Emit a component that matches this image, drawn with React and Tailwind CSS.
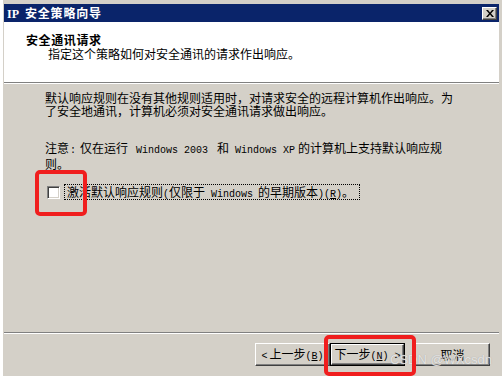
import React from "react";

const cjk = "font-['Noto_Sans_CJK_SC',sans-serif] [text-autospace:no-autospace]";

const mono = "font-['Liberation_Mono',monospace] text-[10px]";

const L = ({ children }) => <span className={mono}>{children}</span>;

// latin run with a fixed advance, so the CJK text after it lands where the reference has it
const Run = ({ className, children }) => (
  <span className={"inline-block align-baseline " + mono + " " + className}>{children}</span>
);

const Btn = ({ children, primary }) => (
  <div className={primary ? "border border-black" : ""}>
    <div
      className={
        "flex items-center justify-center border border-t-white border-l-white border-b-[#404040] border-r-[#404040] bg-[#d4d0c8] shadow-[inset_-1px_-1px_0_#808080] text-[12px] leading-[13px] text-black whitespace-nowrap " +
        (primary ? "h-[21px] w-[73px]" : "h-[23px] w-[75px]")
      }
    >
      <span>{children}</span>
    </div>
  </div>
);

const CloseIcon = () => (
  <svg width="8" height="7" viewBox="0 0 8 7">
    <path d="M0 0h2l2 2.5L6 0h2L5 3.5 8 7H6L4 4.5 2 7H0l3-3.5z" fill="#000" />
  </svg>
);

const App = () => {
  return (
    <div className={"relative w-[502px] h-[376px] overflow-hidden bg-[#d4d0c8] " + cjk}>
      <div className="flex h-full">
        <div className="w-[3px] bg-white" />

        <div className="flex flex-1 flex-col bg-[#d4d0c8] pl-[1px] pr-[3px] pt-[4px]">
          {/* title bar */}
          <div className="flex h-[18px] items-center justify-between bg-[#0a246a] pl-[3px] pr-[2px]">
            <div className="whitespace-nowrap text-[12px] font-bold leading-[14px] text-white">
              <span className="font-['Liberation_Serif',serif] text-[12px] mr-[6px]">IP</span>
              <span className="tracking-[0.8px]">安全策略向导</span>
            </div>
            <div className="flex h-[13px] w-[15px] items-center justify-center border border-t-white border-l-white border-b-[#404040] border-r-[#404040] bg-[#d4d0c8] shadow-[inset_-1px_-1px_0_#808080]">
              <CloseIcon />
            </div>
          </div>

          {/* header */}
          <div className="h-[60px] bg-white pt-[11px] text-[12px] leading-[14px] text-black">
            <div className="pl-[22px] font-bold tracking-[0.6px]">安全通讯请求</div>
            <div className="pl-[44px]">指定这个策略如何对安全通讯的请求作出响应。</div>
          </div>
          <div className="h-[1px] bg-[#808080]" />
          <div className="h-[1px] bg-white" />

          {/* body */}
          <div className="h-[248px] pl-[41px] pt-[7px] text-[12px] leading-[13px] text-black whitespace-nowrap">
            <div>
              <div>默认响应规则在没有其他规则适用时，对请求安全的远程计算机作出响应。为</div>
              <div>了安全地通讯，计算机必须对安全通讯请求做出响应。</div>
            </div>
            <div className="mt-[24px]">
              <div>
                注意<Run className="w-[11px] pl-[1px]">:</Run>仅在运行
                <Run className="w-[89px] pl-[8px]">Windows 2003</Run>和
                <Run className="w-[69px] pl-[6px]">Windows XP</Run>的计算机上支持默认响应规
              </div>
              <div>则。</div>
            </div>
            <div className="mt-[14px] flex h-[16px] items-center pl-[2px]">
              <div className="h-[13px] w-[13px] shrink-0 border border-t-[#808080] border-l-[#808080] border-b-white border-r-white bg-white shadow-[inset_1px_1px_0_#404040,inset_-1px_-1px_0_#d4d0c8]" />
              <div className="ml-[4px] h-[16px] w-[296px] border border-dotted border-black pl-[2px] leading-[14px]">
                <span>
                  激活默认响应规则<Run className="w-[6px]">(</Run>仅限于
                  <Run className="w-[53px] pl-[6px]">Windows</Run>的早期版本<L>)(<u>R</u>)</L>。
                </span>
              </div>
            </div>
          </div>
          <div className="h-[1px] bg-[#808080]" />
          <div className="h-[1px] bg-white" />

          {/* buttons */}
          <div className="flex flex-1 items-start justify-end pr-[9px] pt-[9px]">
            <Btn>
              <L>&lt;</L>
              <span className="ml-[2px]">上一步</span>
              <L>
                (<u>B</u>)
              </L>
            </Btn>
            <Btn primary>
              下一步
              <L>
                (<u>N</u>) &gt;
              </L>
            </Btn>
            <div className="ml-[10px]">
              <Btn>取消</Btn>
            </div>
          </div>
        </div>
      </div>

      {/* watermark */}
      <span className="absolute left-[390px] top-[350px] font-['Liberation_Sans',sans-serif] text-[13px] text-white/70 [text-shadow:0_0_1px_#9a9a9a]">
        CSDN @WXcsdn
      </span>

      {/* red highlights */}
      <div className="absolute left-[35px] top-[170px] h-[46px] w-[52px] rounded-[5px] border-[4px] border-[#f01e1e]" />
      <div className="absolute left-[324px] top-[335px] h-[41px] w-[92px] rounded-[5px] border-[4px] border-[#f01e1e]" />
    </div>
  );
};

export default App;
